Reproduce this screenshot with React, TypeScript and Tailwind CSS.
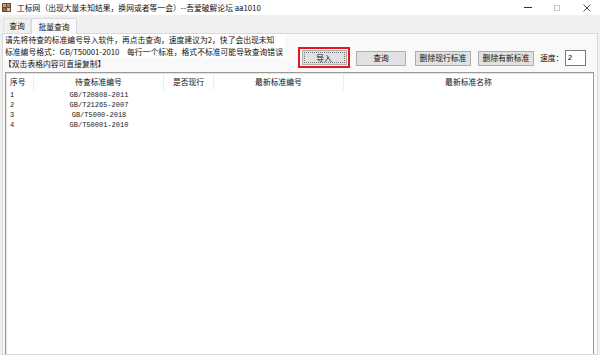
import React from 'react';

const rows = ['GB/T20808-2011', 'GB/T21265-2007', 'GB/T5000-2018', 'GB/T50001-2010'];

function AppIcon() {
  return (
    <svg width="9" height="9" viewBox="0 0 9 9" className="block">
      <rect x="0" y="0" width="9" height="9" fill="#6b4a2e" />
      <rect x="1" y="1" width="3" height="3" fill="#c9a46a" />
      <rect x="5" y="1" width="3" height="3" fill="#8a8a8a" />
      <rect x="1" y="5" width="3" height="3" fill="#9c6b3c" />
      <rect x="5" y="5" width="3" height="3" fill="#d9c7a1" />
    </svg>
  );
}

function WinButton({ label, w }: { label: string; w: string }) {
  return (
    <div className={`${w} h-[15px] flex items-center justify-center bg-[#e1e1e1] border border-[#adadad] text-[7.8px] leading-none`}>
      {label}
    </div>
  );
}

export default function App() {
  return (
    <div className="w-[600px] h-[355px] overflow-hidden flex flex-col bg-[#f0f0f0] text-[#111] font-['Noto_Sans_CJK_SC',sans-serif]">
      {/* Title bar */}
      <div className="h-[15px] shrink-0 bg-white flex items-center">
        <div className="ml-[2px]"><AppIcon /></div>
        <span className="ml-[6px] text-[7.8px] leading-none whitespace-nowrap">工标网（出现大量未知结果，换网或者等一会）--吾爱破解论坛 aa1010</span>
        <div className="ml-auto flex items-center h-full">
          <div className="w-[8px] h-px bg-[#333] mr-[22px]" />
          <div className="w-[6px] h-[6px] border border-[#c8c8c8] mr-[23px]" />
          <svg width="8" height="8" viewBox="0 0 8 8" className="mr-[9px]">
            <path d="M0.5 0.5L7.5 7.5M7.5 0.5L0.5 7.5" stroke="#333" strokeWidth="0.9" />
          </svg>
        </div>
      </div>

      {/* Tabs */}
      <div className="h-[18px] shrink-0 flex items-end pl-[3px] relative z-10">
        <div className="w-[28px] h-[14px] mb-px flex items-center justify-center text-[7.8px] leading-none border border-b-0 border-[#e0e0e0] bg-[#f0f0f0]">查询</div>
        <div className="w-[46px] h-[16px] -mb-px flex items-center justify-center text-[7.8px] leading-none border border-b-0 border-[#d9d9d9] bg-[#f9f9f9]">批量查询</div>
      </div>

      {/* Tab page */}
      <div className="flex-1 mx-[2px] border border-[#d9d9d9] bg-[#f9f9f9] flex flex-col">
        <div className="flex">
          <div className="w-[295px] shrink-0 pl-[1px] flex flex-col text-[7.8px] leading-[12px]">
            <div className="w-[281px] h-[12px] bg-white whitespace-nowrap pl-[1px]">请先将待查的标准编号导入软件，再点击查询，速度建议为2，快了会出现未知</div>
            <div className="w-[281px] h-[12px] bg-white whitespace-nowrap pl-[1px] flex">
              <span className="w-[122px] shrink-0">标准编号格式：GB/T50001-2010</span>
              <span>每行一个标准，格式不标准可能导致查询错误</span>
            </div>
            <div className="h-[12px] whitespace-nowrap">【双击表格内容可直接复制】</div>
          </div>
          <div className="self-end mb-[2px] flex items-center">
            <div className="w-[52px] h-[21px] border-2 border-[#e8141c] flex items-center justify-center">
              <div className="w-[45px] h-[15px] flex items-center justify-center bg-[#e1e1e1] border border-[#adadad] outline outline-1 outline-dotted outline-[#777] -outline-offset-[3px] text-[7.8px] leading-none">导入</div>
            </div>
            <div className="ml-[6px] mt-[1px]"><WinButton label="查询" w="w-[50px]" /></div>
            <div className="ml-[9px] mt-[1px]"><WinButton label="删除现行标准" w="w-[56px]" /></div>
            <div className="ml-[7px] mt-[1px]"><WinButton label="删除有新标准" w="w-[56px]" /></div>
            <span className="ml-[6px] text-[7.8px] leading-none">速度：</span>
            <div className="ml-[2px] w-[21px] h-[16px] bg-white border border-[#7a7a7a] text-[8px] leading-[14px] pl-[1px] font-['Liberation_Mono',monospace]">2</div>
          </div>
        </div>

        {/* Table */}
        <div className="flex-1 mt-[2px] ml-[2px] mr-[3px] bg-white border border-[#9a9a9a] border-b-0 shadow-[inset_1px_1px_0_#e3e3e3]">
          <div className="h-[17px] flex text-[7.8px] leading-none">
            <div className="w-[28px] pl-[4px] flex items-center border-r border-[#ececec]">序号</div>
            <div className="w-[130px] flex items-center justify-center border-r border-[#ececec]">待查标准编号</div>
            <div className="w-[50px] flex items-center justify-center border-r border-[#ececec]">是否现行</div>
            <div className="w-[130px] flex items-center justify-center border-r border-[#ececec]">最新标准编号</div>
            <div className="flex-1 flex items-center justify-center">最新标准名称</div>
          </div>
          {rows.map((r, i) => (
            <div key={r} className="h-[10px] flex text-[7px] leading-[10px] font-['Liberation_Mono',monospace] text-[#222]">
              <div className="w-[28px] pl-[4px]">{i + 1}</div>
              <div className="w-[130px] text-center">{r}</div>
            </div>
          ))}
        </div>
      </div>
    </div>
  );
}
